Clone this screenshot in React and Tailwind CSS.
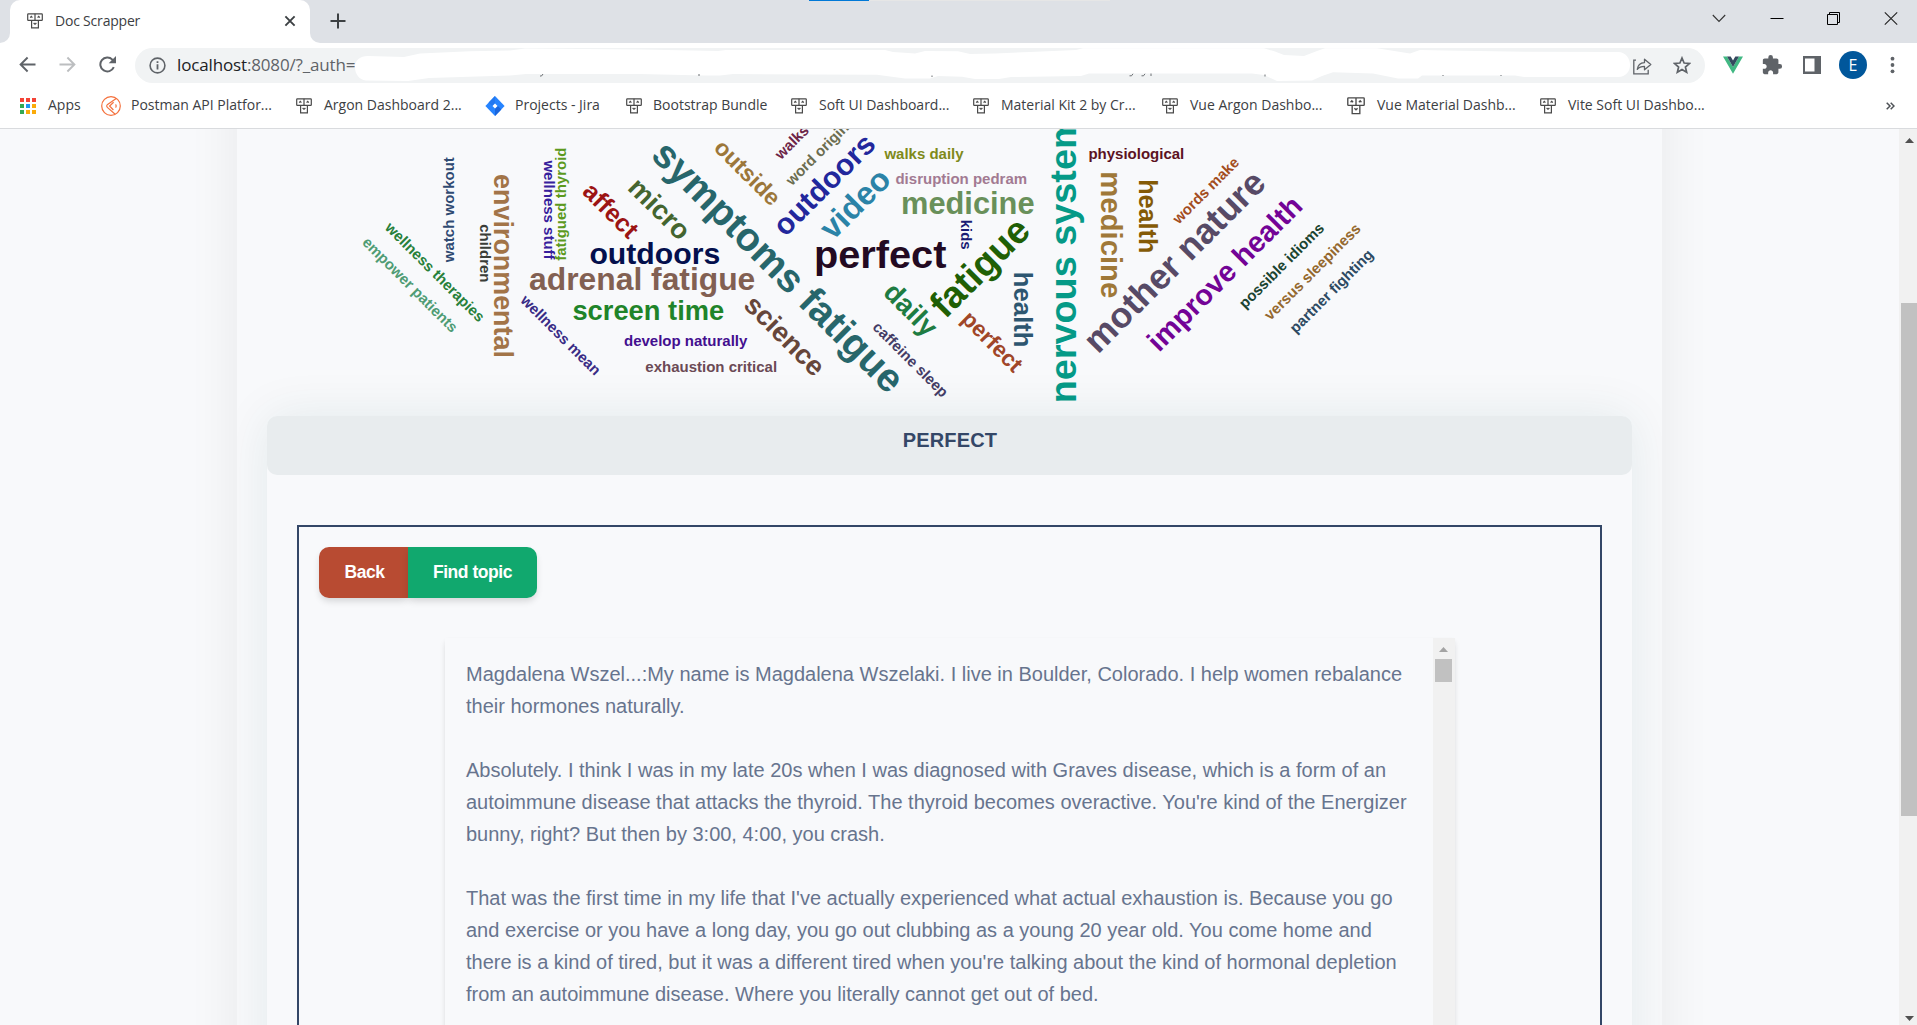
import React from "react";

// mid: x/y is the centre of the word; otherwise x/y is the middle of its baseline.
const WORDS = [
  { t: "empower patients", x: 409.3, y: 285.6, r: 45, s: 15, c: "#4f9c74", mid: true },
  { t: "wellness therapies", x: 434.2, y: 273, r: 45, s: 15, c: "#27803a", mid: true },
  { t: "watch workout", x: 454.3, y: 209.7, r: -90, s: 15, c: "#2f4a72" },
  { t: "children", x: 480, y: 253.3, r: 90, s: 15, c: "#3a3d38" },
  { t: "environmental", x: 494, y: 266, r: 90, s: 26.9, c: "#a27448" },
  { t: "wellness stuff", x: 543.5, y: 210, r: 90, s: 15, c: "#37209c" },
  { t: "fatigued thyroid", x: 566.3, y: 204.2, r: -90, s: 15, c: "#5c9a1e" },
  { t: "affect", x: 609.3, y: 211.8, r: 45, s: 25, c: "#9c1414", mid: true },
  { t: "micro", x: 658, y: 210.3, r: 45, s: 27.4, c: "#44652f", mid: true },
  { t: "outdoors", x: 654.8, y: 263.5, r: 0, s: 30.2, c: "#04104d" },
  { t: "adrenal fatigue", x: 642.2, y: 290.3, r: 0, s: 31.8, c: "#826052" },
  { t: "screen time", x: 648.3, y: 320.2, r: 0, s: 27.3, c: "#1f8429" },
  { t: "develop naturally", x: 685.7, y: 346.4, r: 0, s: 15, c: "#430f8f" },
  { t: "exhaustion critical", x: 711.2, y: 371.7, r: 0, s: 15, c: "#6b4a55" },
  { t: "wellness mean", x: 560, y: 336, r: 45, s: 15, c: "#392c86", mid: true },
  { t: "symptoms fatigue", x: 776.2, y: 268.7, r: 45, s: 39.4, c: "#27666b", mid: true },
  { t: "outside", x: 746.2, y: 173.8, r: 45, s: 23.2, c: "#9c773a", mid: true },
  { t: "walks", x: 792.7, y: 143, r: -45, s: 15, c: "#6d2547", mid: true },
  { t: "word origin", x: 818, y: 154.6, r: -45, s: 15, c: "#6c6d50", mid: true },
  { t: "outdoors", x: 825.7, y: 186.3, r: -45, s: 30, c: "#22279c", mid: true },
  { t: "video", x: 856.8, y: 205.5, r: -45, s: 32.4, c: "#2b83a7", mid: true },
  { t: "walks daily", x: 924, y: 159, r: 0, s: 15, c: "#7f8a1a" },
  { t: "disruption pedram", x: 961.3, y: 184.3, r: 0, s: 15, c: "#a27a92" },
  { t: "medicine", x: 967.8, y: 214, r: 0, s: 30.8, c: "#69905a" },
  { t: "kids", x: 961.2, y: 234.7, r: 90, s: 15, c: "#1a1c73" },
  { t: "perfect", x: 880.2, y: 268.3, r: 0, s: 39.7, c: "#230a22" },
  { t: "fatigue", x: 981.8, y: 269.4, r: -45, s: 37.6, c: "#205f05", mid: true },
  { t: "daily", x: 909.2, y: 311, r: 45, s: 27.6, c: "#1e7c42", mid: true },
  { t: "science", x: 783.3, y: 337, r: 45, s: 27.5, c: "#66463a", mid: true },
  { t: "caffeine sleep", x: 909.7, y: 360.3, r: 45, s: 15, c: "#443c66", mid: true },
  { t: "perfect", x: 991, y: 342.8, r: 45, s: 22.6, c: "#a04628", mid: true },
  { t: "health", x: 1014, y: 309.7, r: 90, s: 25.7, c: "#2d5670" },
  { t: "nervous system", x: 1076, y: 259.4, r: -90, s: 37.8, c: "#059a87" },
  { t: "physiological", x: 1136.3, y: 159.3, r: 0, s: 15, c: "#5c1222" },
  { t: "medicine", x: 1100.6, y: 234.8, r: 90, s: 29.3, c: "#9f7838" },
  { t: "health", x: 1139.3, y: 216.3, r: 90, s: 25.2, c: "#845a06" },
  { t: "words make", x: 1206.7, y: 191.3, r: -45, s: 15, c: "#a34d1e", mid: true },
  { t: "mother nature", x: 1176.3, y: 263.3, r: -45, s: 35.7, c: "#574a66", mid: true },
  { t: "improve health", x: 1226.3, y: 275, r: -45, s: 28.9, c: "#730396", mid: true },
  { t: "possible idioms", x: 1282.3, y: 266.5, r: -45, s: 15, c: "#1b4430", mid: true },
  { t: "versus sleepiness", x: 1313.3, y: 272.6, r: -45, s: 15, c: "#94682e", mid: true },
  { t: "partner fighting", x: 1332.2, y: 292, r: -45, s: 15, c: "#2d4a62", mid: true },
];

function WordCloud() {
  return (
    <svg className="block h-[287px] w-[1425px] shrink-0" viewBox="237 129 1425 287" fontFamily="'Liberation Sans', Arial, sans-serif" fontWeight="700" textAnchor="middle">
      {WORDS.map((w, i) => (
        <text key={i} transform={`translate(${w.x} ${w.y}) rotate(${w.r})`} y={w.mid ? w.s * 0.26 : 0} fontSize={w.s} fill={w.c}>
          {w.t}
        </text>
      ))}
    </svg>
  );
}

function RobotIcon({ className = "h-4 w-4" }) {
  return (
    <svg className={className} viewBox="0 0 16 16" fill="none" stroke="#4a4a4a" strokeWidth="1.2">
      <rect x=".7" y=".8" width="14.6" height="6.6" rx=".6" />
      <path d="M8 .8v6.6M3.2 4.6l1.1-1.2 1.1 1.2M10.6 4.6l1.1-1.2 1.1 1.2M4.6 7.4v7.4h6.8V7.4M6.6 10l1.4 1.3L9.4 10" />
    </svg>
  );
}

function AppsIcon() {
  const colors = ["#f44336", "#f44336", "#f44336", "#34a853", "#2196f3", "#fbab09", "#34a853", "#fbab09", "#fbab09"];
  return (
    <div className="grid w-4 grid-cols-3 gap-0.5">
      {colors.map((c, i) => (
        <div key={i} className="h-1 w-1" style={{ backgroundColor: c }} />
      ))}
    </div>
  );
}

function PostmanIcon() {
  return (
    <svg className="h-5 w-5" viewBox="0 0 20 20" fill="none" stroke="#f4703c" strokeWidth="1.2">
      <circle cx="10" cy="10" r="9.3" />
      <path d="M15.200 2.600L6.600 8.400Q4.800 10 6.600 11.600L14.200 18.200M12.600 6.200L8.600 10l3.800 4M14.600 8.400q1.300 1.600 0 3.200" />
    </svg>
  );
}

function JiraIcon() {
  return (
    <svg className="h-5 w-5" viewBox="0 0 20 20">
      <path d="M10 0l9.600 10L10 20 .4 10z" fill="#2684ff" />
      <path d="M10 20v-7.300l2.800-2.700 3.600 3.400z" fill="#1a66dd" />
      <path d="M10 0v7.300L7.200 10l-3.600-3.400z" fill="#2278f0" />
      <path d="M10 7.400l2.500 2.600-2.500 2.600L7.500 10z" fill="#fff" />
    </svg>
  );
}

function Bookmark({ icon, label, className }) {
  return (
    <div className={`flex shrink-0 items-center ${className}`}>
      {icon}
      <span className="-mt-0.5 whitespace-nowrap text-[14px] leading-5">{label}</span>
    </div>
  );
}

function TabStrip() {
  return (
    <div className="relative flex h-[43px] shrink-0 items-end bg-[#dee1e6]">
      <div className="absolute top-0 left-[809px] flex h-px w-[301px] bg-[#e6e6e6]">
        <div className="h-px w-[60px] bg-[#0078d7]" />
      </div>
      <div className="h-[10px] w-[10px] bg-white">
        <div className="h-full w-full rounded-br-[10px] bg-[#dee1e6]" />
      </div>
      <div className="flex h-[43px] w-[300px] items-center rounded-t-[10px] bg-white pb-px pl-[17px]">
        <RobotIcon />
        <span className="-mt-px ml-3 w-[229px] text-[14px] leading-5 tracking-[-0.2px] text-[#3c4043]">Doc Scrapper</span>
        <svg className="h-3 w-3" viewBox="0 0 12 12" stroke="#3c4043" strokeWidth="1.9">
          <path d="M1.4 1.4l9.2 9.2M10.6 1.4l-9.2 9.2" />
        </svg>
      </div>
      <div className="h-[10px] w-[10px] bg-white">
        <div className="h-full w-full rounded-bl-[10px] bg-[#dee1e6]" />
      </div>
      <svg className="mb-[14px] ml-[10px] h-4 w-4" viewBox="0 0 16 16" stroke="#3c4043" strokeWidth="2">
        <path d="M8 .5v15M.5 8h15" />
      </svg>
      <div className="mb-[17px] ml-auto flex items-center pr-[18px]">
        <svg className="h-4 w-4" viewBox="0 0 16 16" fill="none" stroke="#333" strokeWidth="1.1">
          <path d="M1.8 5l6.2 6.4L14.2 5" />
        </svg>
        <svg className="ml-[42px] h-4 w-4" viewBox="0 0 16 16" stroke="#000" strokeWidth="1">
          <path d="M1.5 8.5h13" />
        </svg>
        <svg className="ml-[41px] h-4 w-4" viewBox="0 0 16 16" fill="none" stroke="#000" strokeWidth="1">
          <path d="M1.5 4.5h10v10h-10zM3.5 4.5v-2h10v10h-2" />
        </svg>
        <svg className="ml-[41px] h-4 w-4" viewBox="0 0 16 16" stroke="#222" strokeWidth="1.1">
          <path d="M1.8 2.3l12.4 12.4M14.2 2.3L1.8 14.7" />
        </svg>
      </div>
    </div>
  );
}

const ERASED =
  "M355 67C355 60 360 56 368 56L404 57 420 53.5 470 51.3 510 50.5 525 48.5 640 49.5 718 51 726 50 885 50 893 52 915 53.5 925 51 958 51.3 970 54 995 53.5 1030 52 1076 50 1083 48.3 1264 48.3 1275 51.5 1284 55 1304 56 1317 51 1325 48.3 1377 48.3 1410 53.5 1420 50 1446 50.5 1524 51.7 1618 52C1626 52 1630 59 1630 65C1630 71 1626 77 1618 77L1524 77 1515 75.5 1422 75.5 1418 78.5 1398 78.5 1373 73.5 1333 72.3 1322 76 1312 80.5 1277 81 1264 75 1252 73.5 1089 73.5 1081 76 1011 77 999 79 975 79 962 76.7 938 76 930 78.5 905 78.5 877 74.7 733 74 720 75.5 705 75.5 640 74 526 74 510 75.5 477 76.5 429 78 408 81 366 80.5C359 79.5 355 74 355 67Z";

function Toolbar() {
  return (
    <div className="flex h-[43px] shrink-0 items-center bg-white pt-px">
      <svg className="-mt-px ml-[19px] h-[17px] w-[17px]" viewBox="0 0 17 17" fill="none" stroke="#5f6368" strokeWidth="1.9">
        <path d="M16.5 8.5H1.8M8.6 1.5L1.6 8.5l7 7" />
      </svg>
      <svg className="-mt-px ml-[23px] h-[17px] w-[17px]" viewBox="0 0 17 17" fill="none" stroke="#bcbec0" strokeWidth="1.9">
        <path d="M.5 8.5h14.7M8.4 1.5l7 7-7 7" />
      </svg>
      <svg className="-mt-px ml-[23px] h-[17px] w-[17px]" viewBox="0 0 17 17" fill="none" stroke="#5f6368" strokeWidth="2">
        <path d="M14.8 11.2A7 7 0 1 1 13.4 3.6L14.6 5" />
        <path d="M17 0v7.3H9.7z" fill="#5f6368" stroke="none" />
      </svg>
      <div className="relative ml-[19px] flex h-[35px] w-[1570px] items-center rounded-full bg-[#f1f3f4]">
        <svg className="ml-[14px] h-[17px] w-[17px]" viewBox="0 0 17 17" fill="none" stroke="#5f6368" strokeWidth="1.6">
          <circle cx="8.5" cy="8.5" r="7.4" />
          <path d="M8.5 7.3v5.2M8.5 4.3v1.8" strokeWidth="1.8" />
        </svg>
        <span className="ml-[11px] text-[17px] leading-6 tracking-[-0.15px] whitespace-nowrap text-[#5f6368]">
          <span className="text-[#202124]">localhost</span>:8080/?_auth=
        </span>
        <svg className="absolute top-0 left-0 h-[35px] w-[1570px]" viewBox="135 48 1570 35">
          <path d={ERASED} fill="#fff" />
          <path d="M1133 73.8l-1.5 2h-2M1145 73.8l-1.5 2h-2M1151 73.5v2.500M543 74l-1.5 2h-1.5M699 74v2M932 75.5v1.5M1265 74.5v2M1443 75v1M1501 75v1" fill="none" stroke="#6b6f73" strokeWidth="1" />
        </svg>
        <svg className="ml-auto h-[19px] w-[19px]" viewBox="0 0 19 19" fill="none" stroke="#5f6368" strokeWidth="1.3">
          <path d="M3 4.2H.8v13.6h14.4v-4" />
          <path d="M4.3 13.4c.5-4.3 3-6.6 7.2-6.8V3.2l6.3 5.4-6.3 5.2v-3.4c-3.3 0-5.4.7-7.2 3z" strokeLinejoin="round" />
        </svg>
        <svg className="mr-[14px] ml-[21px] h-[18px] w-[18px]" viewBox="0 0 18 18" fill="none" stroke="#5f6368" strokeWidth="1.7">
          <path d="M9 2l2.1 5 5.4.45-4.1 3.55 1.25 5.25L9 13.45l-4.65 2.8 1.25-5.25L1.5 7.45l5.4-.45z" />
        </svg>
      </div>
      <svg className="-mt-px ml-[18px] h-[18px] w-5" viewBox="0 0 20 18">
        <path d="M0 .5h4L10 11 16 .5h4L10 17.8z" fill="#41b883" />
        <path d="M4 .5h3.7L10 4.500 12.3.5H16L10 11z" fill="#34495e" />
      </svg>
      <svg className="-mt-px ml-[18px] h-[22px] w-[22px]" viewBox="0 0 24 24" fill="#5f6368">
        <path d="M20.5 11H19V7c0-1.1-.9-2-2-2h-4V3.5a2.5 2.5 0 0 0-5 0V5H4c-1.1 0-1.99.9-1.99 2v3.8H3.5c1.49 0 2.7 1.21 2.7 2.7s-1.21 2.7-2.7 2.7H2V20c0 1.1.9 2 2 2h3.8v-1.5c0-1.490 1.210-2.700 2.700-2.700 1.490 0 2.700 1.210 2.700 2.700V22H17c1.100 0 2-.9 2-2v-4h1.500a2.500 2.500 0 0 0 0-5z" />
      </svg>
      <svg className="-mt-px ml-[20px] h-[18px] w-[18px]" viewBox="0 0 18 18">
        <path d="M0 0h18v18H0zM2 2.500v13h9.500v-13z" fill="#5f6368" fillRule="evenodd" />
      </svg>
      <div className="-mt-px ml-[18px] flex h-7 w-7 items-center justify-center rounded-full bg-[#01579b] text-[16px] leading-5 text-white">E</div>
      <svg className="-mt-px ml-[23px] h-[18px] w-[5px]" viewBox="0 0 5 18" fill="#5f6368">
        <circle cx="2.5" cy="2.7" r="1.9" />
        <circle cx="2.5" cy="9" r="1.9" />
        <circle cx="2.5" cy="15.3" r="1.9" />
      </svg>
    </div>
  );
}

function BookmarksBar() {
  return (
    <div className="flex h-[43px] shrink-0 items-center border-b border-[#d9dbde] bg-white pb-[2px] pl-5 text-[#3c4043]">
      <Bookmark icon={<AppsIcon />} label="Apps" className="w-[81px] gap-3" />
      <Bookmark icon={<PostmanIcon />} label="Postman API Platfor..." className="w-[195px] gap-[10px]" />
      <Bookmark icon={<RobotIcon />} label="Argon Dashboard 2..." className="w-[189px] gap-3" />
      <Bookmark icon={<JiraIcon />} label="Projects - Jira" className="w-[141px] gap-[10px]" />
      <Bookmark icon={<RobotIcon />} label="Bootstrap Bundle" className="w-[165px] gap-[11px]" />
      <Bookmark icon={<RobotIcon />} label="Soft UI Dashboard..." className="w-[182px] gap-3" />
      <Bookmark icon={<RobotIcon />} label="Material Kit 2 by Cr..." className="w-[189px] gap-3" />
      <Bookmark icon={<RobotIcon />} label="Vue Argon Dashbo..." className="w-[185px] gap-3" />
      <Bookmark icon={<RobotIcon className="h-[18px] w-[18px]" />} label="Vue Material Dashb..." className="w-[193px] gap-3" />
      <Bookmark icon={<RobotIcon />} label="Vite Soft UI Dashbo..." className="w-[180px] gap-3" />
      <svg className="mr-[22px] ml-auto h-2 w-[9px]" viewBox="0 0 9 8" fill="none" stroke="#4d5156" strokeWidth="1.5">
        <path d="M.7.7L4 4 .7 7.3M4.7.7L8 4 4.7 7.3" />
      </svg>
    </div>
  );
}

const PARAGRAPHS = [
  ["Magdalena Wszel...:My name is Magdalena Wszelaki. I live in Boulder, Colorado. I help women rebalance", "their hormones naturally."],
  [
    "Absolutely. I think I was in my late 20s when I was diagnosed with Graves disease, which is a form of an",
    "autoimmune disease that attacks the thyroid. The thyroid becomes overactive. You're kind of the Energizer",
    "bunny, right? But then by 3:00, 4:00, you crash.",
  ],
  [
    "That was the first time in my life that I've actually experienced what actual exhaustion is. Because you go",
    "and exercise or you have a long day, you go out clubbing as a young 20 year old. You come home and",
    "there is a kind of tired, but it was a different tired when you're talking about the kind of hormonal depletion",
    "from an autoimmune disease. Where you literally cannot get out of bed.",
  ],
];

function Transcript() {
  return (
    <div className="ml-[146px] mt-[40px] flex h-[500px] w-[1010px] shrink-0 shadow-[0_4px_7px_-1px_rgba(0,0,0,0.1),0_2px_5px_-1px_rgba(0,0,0,0.06)]">
      <div className="flex flex-1 flex-col gap-8 pt-5 pl-[21px] text-[20px] leading-8 text-[#67748e]">
        {PARAGRAPHS.map((lines, i) => (
          <div key={i}>
            {lines.map((line) => (
              <p key={line} className="whitespace-nowrap">{line}</p>
            ))}
          </div>
        ))}
      </div>
      <div className="flex w-[22px] flex-col items-center bg-[#f1f1f1] pt-[9px]">
        <svg className="-ml-px h-[5px] w-[9px]" viewBox="0 0 9 5" fill="#a3a3a3">
          <path d="M4.5 0L9 5H0z" />
        </svg>
        <div className="-ml-px mt-[7px] h-[23px] w-[17px] bg-[#c1c1c1]" />
      </div>
    </div>
  );
}

function TopicCard() {
  return (
    <div className="mx-[30px] flex h-[700px] shrink-0 flex-col rounded-[10px] bg-[#f8f9fb] shadow-[0_0_50px_rgba(20,80,80,0.09)]">
      <div className="flex h-[59px] shrink-0 justify-center rounded-[10px] bg-[#e8ecee] pt-3">
        <h2 className="ml-px text-[20px] leading-6 font-bold tracking-[0.15px] text-[#344767]">PERFECT</h2>
      </div>
      <div className="mx-[30px] mt-[50px] flex flex-1 flex-col border-2 border-[#344767] pt-5">
        <div className="ml-5 flex h-[51px] shrink-0 text-[17.5px] leading-5 font-bold tracking-[-0.44px] text-white">
          <div className="flex w-[89px] items-center justify-center rounded-l-[10px] bg-[#b84b32] pb-px pl-0.5 shadow-[0_4px_7px_-1px_rgba(0,0,0,0.15)]">Back</div>
          <div className="flex w-[129px] items-center justify-center rounded-r-[10px] bg-[#11a86e] pb-px shadow-[0_4px_7px_-1px_rgba(0,0,0,0.15)]">Find topic</div>
        </div>
        <Transcript />
      </div>
    </div>
  );
}

function PageScrollbar() {
  return (
    <div className="flex w-[18px] shrink-0 flex-col items-center bg-[#f1f1f1] pt-[9px] pb-[4px]">
      <svg className="ml-[2px] h-[5px] w-[9px] shrink-0" viewBox="0 0 9 5" fill="#505050">
        <path d="M4.5 0L9 5H0z" />
      </svg>
      <div className="mt-[160px] h-[513px] w-4 shrink-0 self-end bg-[#c1c1c1]" />
      <svg className="mt-auto ml-[2px] h-[5px] w-[9px] shrink-0" viewBox="0 0 9 5" fill="#505050">
        <path d="M0 0h9L4.5 5z" />
      </svg>
    </div>
  );
}

export default function App() {
  return (
    <div className="flex h-[1025px] w-[1917px] flex-col overflow-hidden font-['Open_Sans',sans-serif]">
      <TabStrip />
      <Toolbar />
      <BookmarksBar />
      <div className="flex h-[896px] shrink-0 overflow-hidden bg-[#f8f9fb] font-['Liberation_Sans',Arial,sans-serif]">
        <div className="flex flex-1 overflow-hidden pl-[237px]">
          <div className="-mt-20 flex h-[1056px] w-[1425px] shrink-0 flex-col overflow-hidden pt-20 [clip-path:inset(0_-60px)] shadow-[0_0_50px_rgba(0,0,0,0.07)]">
            <WordCloud />
            <TopicCard />
          </div>
        </div>
        <PageScrollbar />
      </div>
    </div>
  );
}
